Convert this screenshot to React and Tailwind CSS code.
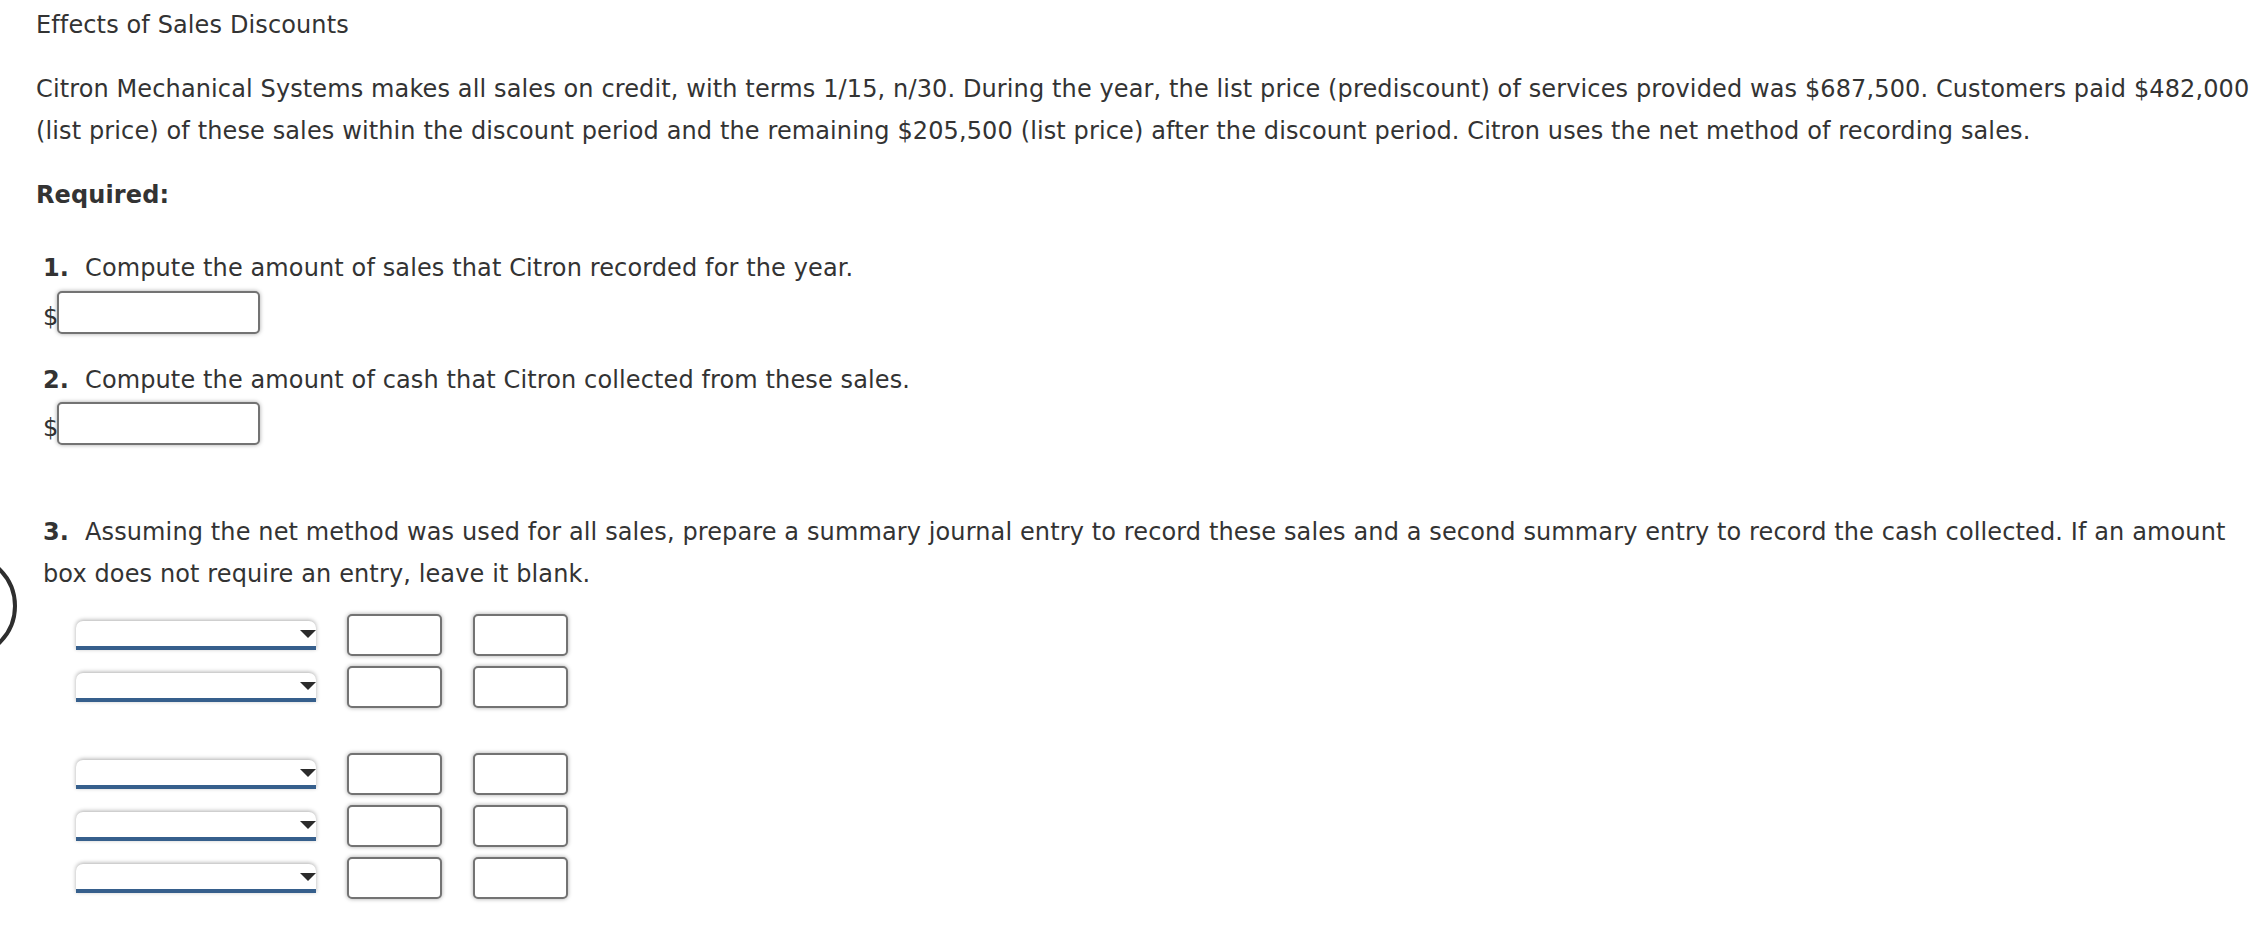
import React from 'react';

const Box = ({ className = '' }) => (
  <input
    type="text"
    className={`bg-white border-2 border-[#737373] rounded-[5px] shadow-[0_0_4px_rgba(0,0,0,0.35)] outline-none ${className}`}
  />
);

const Select = () => (
  <div className="relative w-[240px] h-[29px] bg-white rounded-t-[7px] border-b-4 border-[#365f8c] shadow-[0_-1px_4px_rgba(0,0,0,0.32)]">
    <span className="absolute right-0 top-[9px] w-0 h-0 border-l-[8px] border-r-[8px] border-t-[8px] border-l-transparent border-r-transparent border-t-[#2b2b2b]" />
  </div>
);

const JournalRow = () => (
  <div className="flex items-center h-[42px] gap-[31px]">
    <Select />
    <Box className="w-[95px] h-[42px]" />
    <Box className="w-[95px] h-[42px]" />
  </div>
);

const Question = ({ num, children }) => (
  <p>
    <span className="inline-block w-[42px] font-bold">{num}</span>
    {children}
  </p>
);

const Amount = () => (
  <div className="flex items-center h-[43px]">
    <span className="w-[14px] leading-[24px] pt-[8px]">$</span>
    <Box className="w-[203px] h-[43px]" />
  </div>
);

export default function App() {
  return (
    <div className="relative min-h-screen overflow-hidden bg-white text-[#333] font-['DejaVu_Sans',sans-serif] text-[24px] leading-[42px] tracking-[0.12px]">
      {/* cut-off round button on the left edge */}
      <div className="absolute left-[-89px] top-[553px] w-[106px] h-[106px] rounded-full border-4 border-[#2e2e2e]" />

      <div className="pl-[36px] pr-[6px] pt-[4px]">
        <p>Effects of Sales Discounts</p>

        <p className="mt-[22px]">
          Citron Mechanical Systems makes all sales on credit, with terms 1/15, n/30. During the year, the list price
          (prediscount) of services provided was $687,500. Customers paid $482,000 (list price) of these sales within the
          discount period and the remaining $205,500 (list price) after the discount period. Citron uses the net method of
          recording sales.
        </p>

        <p className="mt-[22px] font-bold">Required:</p>

        <div className="pl-[7px] mt-[31px]">
          <Question num="1.">Compute the amount of sales that Citron recorded for the year.</Question>
          <div className="mt-[2px]">
            <Amount />
          </div>

          <div className="mt-[25px]">
            <Question num="2.">Compute the amount of cash that Citron collected from these sales.</Question>
          </div>
          <div className="mt-[1px]">
            <Amount />
          </div>

          <div className="mt-[66px]">
            <Question num="3.">
              Assuming the net method was used for all sales, prepare a summary journal entry to record these sales and a
              second summary entry to record the cash collected. If an amount box does not require an entry, leave it blank.
            </Question>
          </div>

          <div className="pl-[33px] mt-[19px] flex flex-col">
            <div className="flex flex-col gap-[10px]">
              <JournalRow />
              <JournalRow />
            </div>
            <div className="flex flex-col gap-[10px] mt-[45px]">
              <JournalRow />
              <JournalRow />
              <JournalRow />
            </div>
          </div>
        </div>
      </div>
    </div>
  );
}
